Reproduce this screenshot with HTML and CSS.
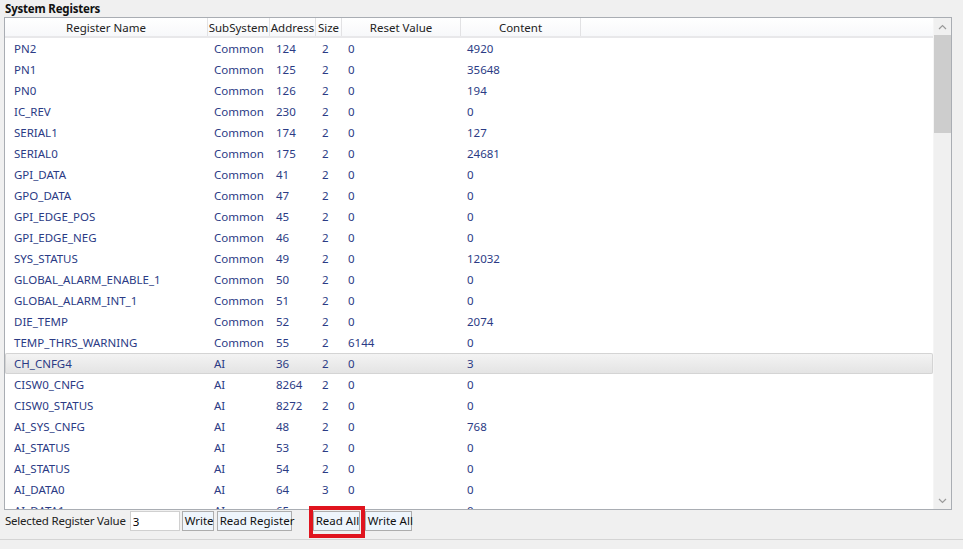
FILE: index.html
```html
<!DOCTYPE html>
<html>
<head>
<meta charset="utf-8">
<link rel="stylesheet" href="styles.css">
</head>
<body>
<div class="title">System Registers</div>
<div class="gridbox">
  <div class="tablearea">
    <div class="hdr">
      <div class="hc c1">Register Name</div>
      <div class="hc c2">SubSystem</div>
      <div class="hc c3">Address</div>
      <div class="hc c4">Size</div>
      <div class="hc c5">Reset Value</div>
      <div class="hc c6">Content</div>
      <div class="hc c7"></div>
    </div>
    <div class="rows">
      <div class="row"><span class="c1">PN2</span><span class="c2">Common</span><span class="c3">124</span><span class="c4">2</span><span class="c5">0</span><span class="c6">4920</span></div>
      <div class="row"><span class="c1">PN1</span><span class="c2">Common</span><span class="c3">125</span><span class="c4">2</span><span class="c5">0</span><span class="c6">35648</span></div>
      <div class="row"><span class="c1">PN0</span><span class="c2">Common</span><span class="c3">126</span><span class="c4">2</span><span class="c5">0</span><span class="c6">194</span></div>
      <div class="row"><span class="c1">IC_REV</span><span class="c2">Common</span><span class="c3">230</span><span class="c4">2</span><span class="c5">0</span><span class="c6">0</span></div>
      <div class="row"><span class="c1">SERIAL1</span><span class="c2">Common</span><span class="c3">174</span><span class="c4">2</span><span class="c5">0</span><span class="c6">127</span></div>
      <div class="row"><span class="c1">SERIAL0</span><span class="c2">Common</span><span class="c3">175</span><span class="c4">2</span><span class="c5">0</span><span class="c6">24681</span></div>
      <div class="row"><span class="c1">GPI_DATA</span><span class="c2">Common</span><span class="c3">41</span><span class="c4">2</span><span class="c5">0</span><span class="c6">0</span></div>
      <div class="row"><span class="c1">GPO_DATA</span><span class="c2">Common</span><span class="c3">47</span><span class="c4">2</span><span class="c5">0</span><span class="c6">0</span></div>
      <div class="row"><span class="c1">GPI_EDGE_POS</span><span class="c2">Common</span><span class="c3">45</span><span class="c4">2</span><span class="c5">0</span><span class="c6">0</span></div>
      <div class="row"><span class="c1">GPI_EDGE_NEG</span><span class="c2">Common</span><span class="c3">46</span><span class="c4">2</span><span class="c5">0</span><span class="c6">0</span></div>
      <div class="row"><span class="c1">SYS_STATUS</span><span class="c2">Common</span><span class="c3">49</span><span class="c4">2</span><span class="c5">0</span><span class="c6">12032</span></div>
      <div class="row"><span class="c1">GLOBAL_ALARM_ENABLE_1</span><span class="c2">Common</span><span class="c3">50</span><span class="c4">2</span><span class="c5">0</span><span class="c6">0</span></div>
      <div class="row"><span class="c1">GLOBAL_ALARM_INT_1</span><span class="c2">Common</span><span class="c3">51</span><span class="c4">2</span><span class="c5">0</span><span class="c6">0</span></div>
      <div class="row"><span class="c1">DIE_TEMP</span><span class="c2">Common</span><span class="c3">52</span><span class="c4">2</span><span class="c5">0</span><span class="c6">2074</span></div>
      <div class="row"><span class="c1">TEMP_THRS_WARNING</span><span class="c2">Common</span><span class="c3">55</span><span class="c4">2</span><span class="c5">6144</span><span class="c6">0</span></div>
      <div class="row sel"><span class="c1">CH_CNFG4</span><span class="c2">AI</span><span class="c3">36</span><span class="c4">2</span><span class="c5">0</span><span class="c6">3</span></div>
      <div class="row"><span class="c1">CISW0_CNFG</span><span class="c2">AI</span><span class="c3">8264</span><span class="c4">2</span><span class="c5">0</span><span class="c6">0</span></div>
      <div class="row"><span class="c1">CISW0_STATUS</span><span class="c2">AI</span><span class="c3">8272</span><span class="c4">2</span><span class="c5">0</span><span class="c6">0</span></div>
      <div class="row"><span class="c1">AI_SYS_CNFG</span><span class="c2">AI</span><span class="c3">48</span><span class="c4">2</span><span class="c5">0</span><span class="c6">768</span></div>
      <div class="row"><span class="c1">AI_STATUS</span><span class="c2">AI</span><span class="c3">53</span><span class="c4">2</span><span class="c5">0</span><span class="c6">0</span></div>
      <div class="row"><span class="c1">AI_STATUS</span><span class="c2">AI</span><span class="c3">54</span><span class="c4">2</span><span class="c5">0</span><span class="c6">0</span></div>
      <div class="row"><span class="c1">AI_DATA0</span><span class="c2">AI</span><span class="c3">64</span><span class="c4">3</span><span class="c5">0</span><span class="c6">0</span></div>
      <div class="row"><span class="c1">AI_DATA1</span><span class="c2">AI</span><span class="c3">65</span><span class="c4">3</span><span class="c5">0</span><span class="c6">0</span></div>
    </div>
  </div>
  <div class="vscroll">
    <div class="arrow"><svg width="9" height="6" viewBox="0 0 9 6"><path d="M1 5 L4.5 1.5 L8 5" fill="none" stroke="#9a9a9a" stroke-width="1.2"/></svg></div>
    <div class="track"><div class="thumb"></div></div>
    <div class="arrow"><svg width="9" height="6" viewBox="0 0 9 6"><path d="M1 1 L4.5 4.5 L8 1" fill="none" stroke="#9a9a9a" stroke-width="1.2"/></svg></div>
  </div>
</div>
<div class="bottombar">
  <span class="lbl">Selected Register Value</span>
  <input class="valbox" type="text" value="3">
  <button class="btn b-write">Write</button>
  <button class="btn b-readreg">Read Register</button>
  <div class="hl"><button class="btn b-readall">Read All</button></div>
  <button class="btn b-writeall">Write All</button>
</div>
<div class="status"></div>
</body>
</html>
```

FILE: styles.css
```css
html, body {
  margin: 0;
  padding: 0;
  background: #f0f0f0;
  font-family: "Segoe UI", "Noto Sans", "Open Sans", sans-serif;
  font-size: 11.5px;
  width: 963px;
  height: 549px;
  overflow: hidden;
}
.title {
  font-weight: bold;
  height: 17px;
  line-height: 17px;
  padding-left: 5px;
  color: #111;
  letter-spacing: -0.2px;
}
.gridbox {
  margin-left: 4px;
  width: 946px;
  height: 491px;
  border: 1px solid #a9adb3;
  background: #fff;
  display: flex;
}
.tablearea {
  flex: 1;
  display: flex;
  flex-direction: column;
  overflow: hidden;
}
.hdr {
  display: flex;
  height: 18px;
  flex-shrink: 0;
  background: linear-gradient(#ffffff, #f7f8fa);
  border-bottom: 2px solid #e8e8ea;
  color: #222;
}
.hc {
  box-sizing: border-box;
  border-right: 1px solid #e2e2e4;
  text-align: center;
  line-height: 20px;
  white-space: nowrap;
  overflow: hidden;
}
.hc.c7 { flex: 1; border-right: none; }
.c1 { width: 203px; }
.c2 { width: 62px; }
.c3 { width: 46px; }
.c4 { width: 26px; }
.c5 { width: 119px; }
.c6 { width: 120px; }
.rows {
  flex: 1;
  overflow: hidden;
}
.row {
  display: flex;
  height: 21px;
  line-height: 21px;
  color: #2b3b85;
  white-space: nowrap;
}
.row span {
  box-sizing: border-box;
  padding-left: 6px;
  flex-shrink: 0;
}
.row span.c1 { padding-left: 9px; }
.row.sel {
  background: linear-gradient(#f4f4f4, #e3e3e3);
  box-shadow: inset 0 0 0 1px #d4d4d4;
  border-radius: 2px;
}
.vscroll {
  width: 17px;
  background: #f0f0f0;
  display: flex;
  flex-direction: column;
  border-left: 1px solid #f5f5f5;
}
.arrow {
  height: 17px;
  display: flex;
  align-items: center;
  justify-content: center;
}
.track {
  flex: 1;
}
.thumb {
  height: 98px;
  background: #cdcdcd;
}
.bottombar {
  display: flex;
  align-items: flex-start;
  height: 28px;
  padding-top: 1px;
  padding-left: 5px;
  border-bottom: 1px solid #d4d4d4;
}
.lbl {
  color: #222;
  margin-right: 4px;
  line-height: 19px;
  white-space: nowrap;
  letter-spacing: -0.22px;
}
.valbox {
  width: 50px;
  height: 20px;
  box-sizing: border-box;
  border: 1px solid #d0d0d0;
  background: #fff;
  font: inherit;
  padding: 0 2px;
  margin: 0 2px 0 0;
  outline: none;
}
.btn {
  font: inherit;
  color: #111;
  height: 20px;
  box-sizing: border-box;
  border: 1px solid #adadad;
  background: #eef5fc;
  padding: 0 2px;
  margin: 0;
  line-height: 16px;
  white-space: nowrap;
}
.b-write { margin-right: 3px; width: 32px; }
.b-readreg { margin-right: 21px; width: 75px; }
.hl {
  position: relative;
  display: flex;
  margin-right: 5px;
}
.hl::after {
  content: "";
  position: absolute;
  left: -4px;
  right: -5px;
  top: -5px;
  bottom: -7px;
  border: 4px solid #e0141e;
  pointer-events: none;
}
.b-readall { width: 47px; }
.b-writeall { width: 47px; }
```
